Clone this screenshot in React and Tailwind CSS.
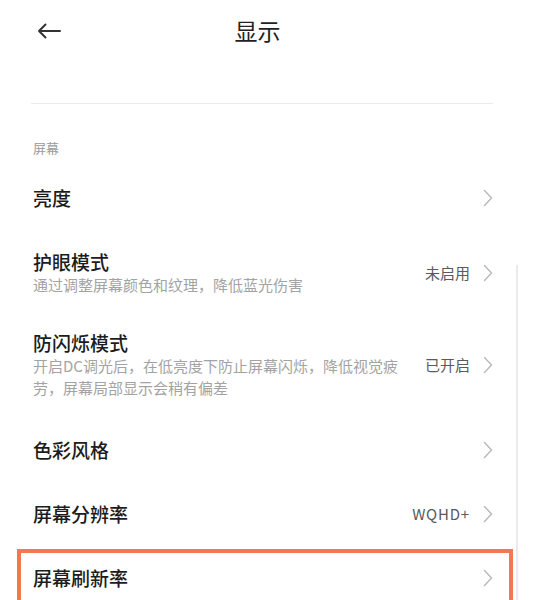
import React from 'react';

const font = { fontFamily: '"Noto Sans CJK SC", "Noto Sans", sans-serif' };

const Chevron = () => (
    <svg width="10" height="18" viewBox="0 0 10 18" className="shrink-0">
        <path d="M1.5 1.5 L8.5 9 L1.5 16.5" fill="none" stroke="#b8b8b8" strokeWidth="1.4" strokeLinecap="round" strokeLinejoin="round" />
    </svg>
);

const Row = ({ title, sub, value, valueClass = '', className = '' }) => (
    <div className={`flex items-center justify-between ${className}`}>
        <div className="flex flex-col min-w-0">
            <span className="text-[19px] leading-[24px] font-medium text-[#1c1c1c]">{title}</span>
            {sub && <span className="text-[15px] leading-[22px] text-[#a3a3a3] max-w-[378px]">{sub}</span>}
        </div>
        <div className="flex items-center gap-[13px] shrink-0">
            {value && <span className={`text-[15px] text-[#5a5a5a] ${valueClass}`}>{value}</span>}
            <Chevron />
        </div>
    </div>
);

export default function App() {
    return (
        <div className="relative w-[534px] h-[600px] overflow-hidden bg-white" style={font}>
            {/* header */}
            <div className="relative h-[60px] flex items-center justify-center">
                <svg width="24" height="16" viewBox="0 0 24 16" className="absolute left-[37px] top-[23px]">
                    <path d="M23 8 H2 M8.5 1.5 L2 8 L8.5 14.5" fill="none" stroke="#333" strokeWidth="2" strokeLinecap="round" strokeLinejoin="round" />
                </svg>
                <span className="text-[23px] text-[#222] mr-[19px]">显示</span>
            </div>

            <div className="ml-[31px] mr-[41px] mt-[43px] h-px bg-[#ececec]" />

            <div className="pl-[33px] pr-[41px]">
                <div className="h-[62px] flex items-end pb-[9px]">
                    <span className="text-[13px] leading-[18px] text-[#9a9a9a]">屏幕</span>
                </div>
                <Row title="亮度" className="h-[64px]" />
                <Row title="护眼模式" sub="通过调整屏幕颜色和纹理，降低蓝光伤害" value="未启用" className="py-[20px]" />
                <Row title="防闪烁模式" sub="开启DC调光后，在低亮度下防止屏幕闪烁，降低视觉疲劳，屏幕局部显示会稍有偏差" value="已开启" className="pt-[15px] pb-[19px]" />
                <Row title="色彩风格" className="h-[64px]" />
                <Row title="屏幕分辨率" value="WQHD+" valueClass="tracking-[0.8px]" className="h-[64px]" />
            </div>

            <div className="ml-[17px] mr-[21px] mt-[3px] border-[4px] border-b-0 border-[#ee7a4e] h-[80px] pl-[12px] pr-[16px]">
                <Row title="屏幕刷新率" className="h-[50px]" />
            </div>

            {/* scrollbar */}
            <div className="absolute right-[16px] top-[265px] bottom-0 w-[2px] bg-[#ebebeb]" />
        </div>
    );
}
